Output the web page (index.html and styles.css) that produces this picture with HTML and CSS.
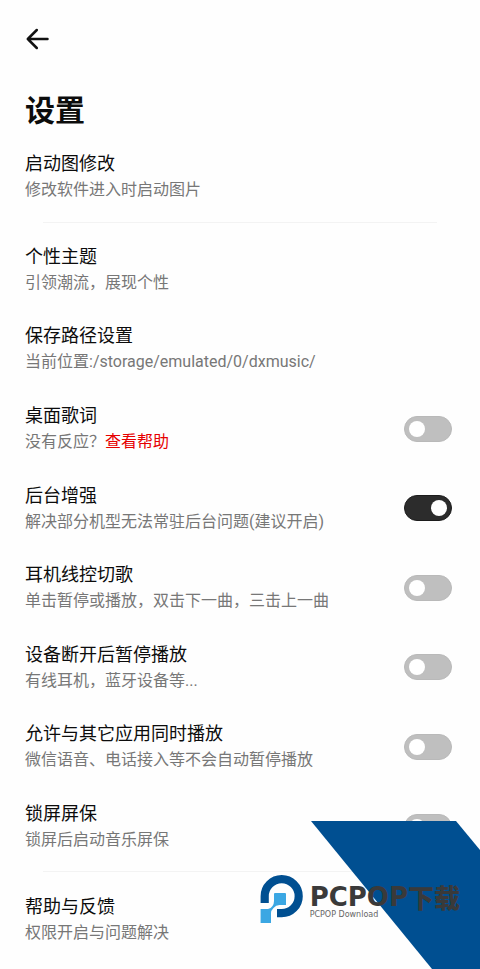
FILE: index.html
```html
<!DOCTYPE html>
<html lang="zh-CN">
<head>
<meta charset="utf-8">
<meta name="viewport" content="width=device-width, initial-scale=1">
<title>设置</title>
<link rel="stylesheet" href="styles.css">
</head>
<body>
<div class="page">
  <header class="header">
    <button class="back" type="button" aria-label="返回">
      <svg width="24" height="24" viewBox="0 0 24 24" fill="none" stroke="currentColor" stroke-width="2.500" stroke-linecap="round" stroke-linejoin="round"><path d="M22.500 12H2.800M11.800 3L2.800 12L11.800 21"/></svg>
    </button>
    <h1 class="heading">设置</h1>
  </header>
  <main class="list">
    <section class="row"><div class="info"><h2 class="title">启动图修改</h2><p class="note">修改软件进入时启动图片</p></div></section>
    <hr class="divider">
    <section class="row"><div class="info"><h2 class="title">个性主题</h2><p class="note">引领潮流，展现个性</p></div></section>
    <section class="row"><div class="info"><h2 class="title">保存路径设置</h2><p class="note">当前位置:/storage/emulated/0/dxmusic/</p></div></section>
    <section class="row"><div class="info"><label class="title" for="lyrics">桌面歌词</label><p class="note">没有反应？<a class="help" href="#help">查看帮助</a></p></div><input class="switch" id="lyrics" type="checkbox"></section>
    <section class="row"><div class="info"><label class="title" for="background">后台增强</label><p class="note">解决部分机型无法常驻后台问题(建议开启)</p></div><input class="switch" id="background" type="checkbox" checked></section>
    <section class="row"><div class="info"><label class="title" for="headset">耳机线控切歌</label><p class="note">单击暂停或播放，双击下一曲，三击上一曲</p></div><input class="switch" id="headset" type="checkbox"></section>
    <section class="row"><div class="info"><label class="title" for="unplug">设备断开后暂停播放</label><p class="note">有线耳机，蓝牙设备等...</p></div><input class="switch" id="unplug" type="checkbox"></section>
    <section class="row"><div class="info"><label class="title" for="mix">允许与其它应用同时播放</label><p class="note">微信语音、电话接入等不会自动暂停播放</p></div><input class="switch" id="mix" type="checkbox"></section>
    <section class="row"><div class="info"><label class="title" for="lock">锁屏屏保</label><p class="note">锁屏后启动音乐屏保</p></div><input class="switch" id="lock" type="checkbox"></section>
    <hr class="divider">
    <section class="row" id="help"><div class="info"><h2 class="title">帮助与反馈</h2><p class="note">权限开启与问题解决</p></div></section>
  </main>
  <aside class="badge">
    <svg class="ribbon" width="170" height="148" viewBox="0 0 170 148" aria-hidden="true"><path fill="#004f91" d="M1 0H146L170 29V148H122Z"/></svg>
    <div class="brand">
      <svg width="44" height="50" viewBox="0 0 44 50" aria-hidden="true">
        <path d="M4.700 29V22.200A17 17 0 1 1 21.700 39.200H17" fill="none" stroke="#004f91" stroke-width="8.200"/>
        <path fill="#3ba7e3" d="M15 19H25Q26 19 26 20V31H19.500Q16 31 13.500 34Q11 36.500 11 39V49H.600V35H8Q11 34.500 12.500 32Q14 30 14 27V20Q14 19 15 19Z"/>
      </svg>
      <div class="wordmark">
        <strong class="name">PCPOP<span class="name-cn">下载</span></strong>
        <span class="tagline">PCPOP Download</span>
      </div>
    </div>
  </aside>
</div>
</body>
</html>
```
FILE: styles.css
```css
* {
  box-sizing: border-box;
}

body {
  margin: 0;
  background: #fefefe;
  color: #0c0c0c;
  font-family: Roboto, "Noto Sans CJK SC", sans-serif;
}

h1,
h2,
p {
  margin: 0;
}

.page {
  position: relative;
  display: flex;
  flex-direction: column;
  min-height: 100vh;
  padding-bottom: 10px;
  overflow: hidden;
}

.header {
  padding: 27px 25px 4px;
}

.back {
  display: block;
  width: 24px;
  height: 24px;
  padding: 0;
  border: 0;
  background: none;
  color: #111;
}

.back svg {
  display: block;
}

.heading {
  margin-top: 38px;
  font-size: 30px;
  font-weight: 700;
  line-height: 44px;
}

.list {
  display: flex;
  flex: 1;
  flex-direction: column;
}

.row {
  display: flex;
  flex: 1 0 auto;
  align-items: center;
  justify-content: space-between;
  gap: 16px;
  padding: 13px 28px 13px 25px;
}

.title {
  display: block;
  font-size: 18px;
  font-weight: 400;
  line-height: 27px;
}

.note {
  color: #777;
  font-size: 16px;
  line-height: 26px;
}

.help {
  color: #e60000;
  text-decoration: none;
}

.divider {
  align-self: stretch;
  height: 1px;
  margin: 5px 43px 7px;
  border: 0;
  background: #f3f3f3;
}

.switch {
  display: flex;
  flex: none;
  align-items: center;
  width: 48px;
  height: 26px;
  margin: 0;
  padding: 0 4px;
  border: 1px solid #b9b9b9;
  border-radius: 13px;
  background: #bfbfbf;
  appearance: none;
}

.switch::before {
  width: 16px;
  height: 16px;
  border-radius: 50%;
  background: #fff;
  content: "";
}

.switch:checked {
  justify-content: flex-end;
  border-color: #1c1c1c;
  background: #2c2c2c;
}

.badge {
  position: absolute;
  right: 0;
  bottom: 0;
  color: #3a3a3a;
}

.ribbon {
  display: block;
}

.brand {
  position: absolute;
  right: 20px;
  bottom: 45px;
  display: flex;
  gap: 6px;
}

.wordmark {
  display: flex;
  flex-direction: column;
  padding-top: 10px;
  white-space: nowrap;
}

.name {
  display: flex;
  align-items: center;
  font-family: "DejaVu Sans", sans-serif;
  font-size: 26px;
  font-weight: 700;
  line-height: 26px;
}

.name-cn {
  font-family: "Noto Sans CJK SC", sans-serif;
  font-weight: 900;
}

.tagline {
  color: #666;
  font-family: "DejaVu Sans", sans-serif;
  font-size: 8px;
  line-height: 10px;
}
```
